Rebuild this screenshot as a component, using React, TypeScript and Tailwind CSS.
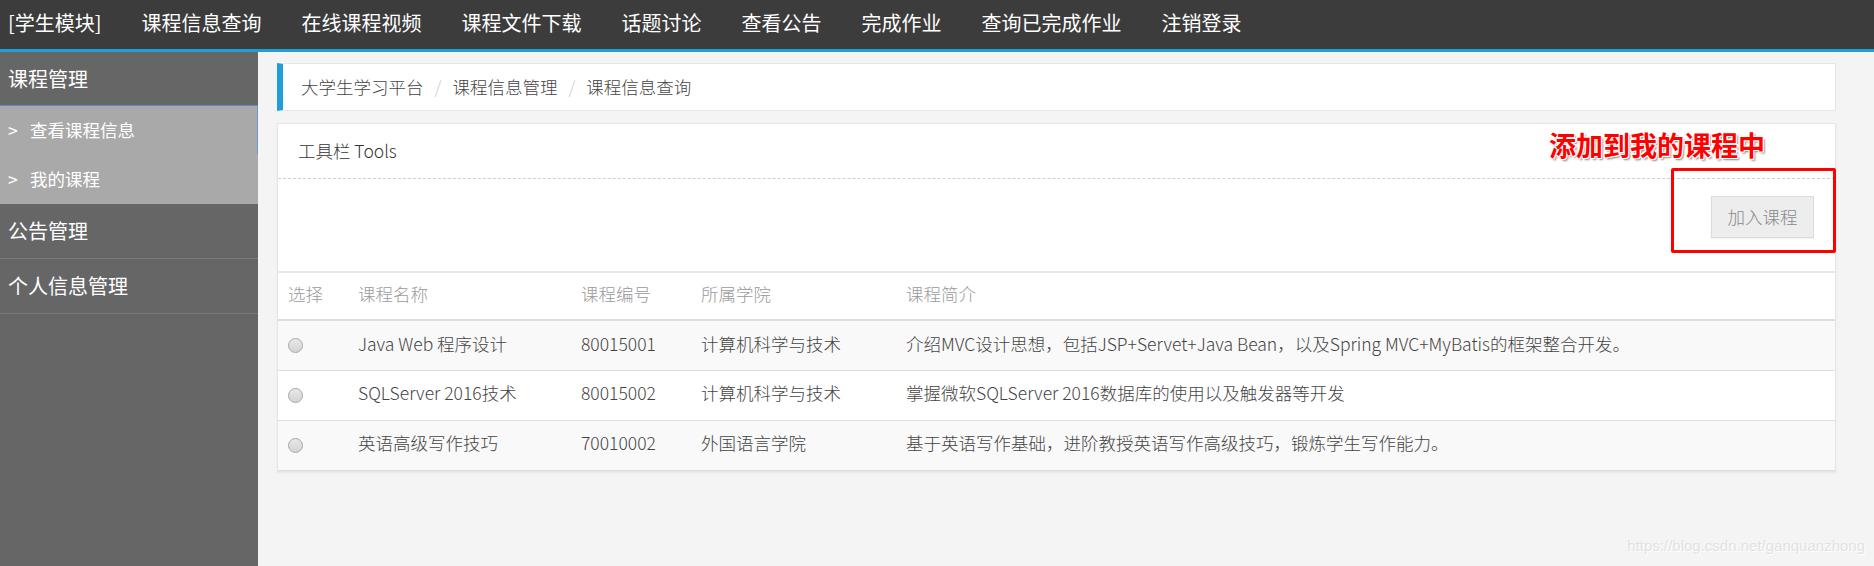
import React from "react";

const navItems = ["课程信息查询", "在线课程视频", "课程文件下载", "话题讨论", "查看公告", "完成作业", "查询已完成作业", "注销登录"];

const rows = [
  { name: "Java Web 程序设计", no: "80015001", college: "计算机科学与技术", intro: "介绍MVC设计思想，包括JSP+Servet+Java Bean，以及Spring MVC+MyBatis的框架整合开发。", bg: "bg-[#f9f9f9]" },
  { name: "SQLServer 2016技术", no: "80015002", college: "计算机科学与技术", intro: "掌握微软SQLServer 2016数据库的使用以及触发器等开发", bg: "bg-white" },
  { name: "英语高级写作技巧", no: "70010002", college: "外国语言学院", intro: "基于英语写作基础，进阶教授英语写作高级技巧，锻炼学生写作能力。", bg: "bg-[#f9f9f9]" },
];

export default function App() {
  return (
    <div className="relative w-[1874px] h-[566px] overflow-hidden flex flex-col bg-[#f4f4f4] font-['Noto_Sans_CJK_SC',sans-serif]">
      {/* top nav */}
      <div className="h-[52px] shrink-0 bg-[#3c3c3c] border-b-[3px] border-[#1e9fd8] flex items-center text-[20px] text-white pb-[4px]">
        <div className="pl-[8px] pr-[20px]">[学生模块]</div>
        {navItems.map((t) => (
          <div key={t} className="px-[20px] whitespace-nowrap">{t}</div>
        ))}
      </div>

      <div className="flex flex-1">
        {/* sidebar */}
        <aside className="w-[258px] shrink-0 bg-[#666666] text-white">
          <div className="h-[54px] flex items-center pl-[8px] text-[20px] border-b border-[#5d88cc]">课程管理</div>
          <div className="bg-[#a9a9a9] text-[17.5px]">
            <div className="h-[48px] flex items-center pl-[8px] border-r border-[#6f95d5]">
              <span className="w-[22px]">&gt;</span>查看课程信息
            </div>
            <div className="h-[50px] flex items-center pl-[8px]">
              <span className="w-[22px]">&gt;</span>我的课程
            </div>
          </div>
          <div className="h-[55px] flex items-center pl-[8px] text-[20px] border-b border-[#7a7a7a]">公告管理</div>
          <div className="h-[55px] flex items-center pl-[8px] text-[20px] border-b border-[#7a7a7a]">个人信息管理</div>
        </aside>

        {/* main */}
        <main className="flex-1 pl-[19px] pr-[38px] pt-[11px]">
          <div className="h-[48px] bg-white border border-[#e6e6e6] border-l-[6px] border-l-[#1e9fd8] flex items-center pl-[18px] text-[17.5px] text-[#444] font-light">
            <span>大学生学习平台</span>
            <span className="px-[11px] text-[#cccccc]">/</span>
            <span>课程信息管理</span>
            <span className="px-[11px] text-[#cccccc]">/</span>
            <span>课程信息查询</span>
          </div>

          <div className="relative mt-[12px] bg-white border border-[#e6e6e6] shadow-[0_1px_2px_rgba(0,0,0,0.06)]">
            <div className="h-[55px] flex items-center pl-[20px] border-b border-dashed border-[#cfcfcf] text-[17.5px] text-[#333] font-light">
              工具栏 Tools
            </div>
            <div className="h-[92px] flex justify-end items-start pt-[17px] pr-[21px]">
              <button className="w-[103px] h-[42px] bg-[#ededed] border border-[#dcdcdc] text-[17.5px] text-[#8a8a8a] font-light shadow-[0_1px_1px_rgba(0,0,0,0.05)]">
                加入课程
              </button>
            </div>
            <div className="h-[2px] bg-[#e8e8e8]" />
            <table className="w-full border-collapse text-[17.5px] font-light">
              <thead>
                <tr className="h-[47px] border-b-2 border-[#dddddd] text-[#9a9a9a]">
                  <th className="w-[70px] text-left font-light pl-[10px] pb-[3px]">选择</th>
                  <th className="w-[223px] text-left font-light pl-[10px] pb-[3px]">课程名称</th>
                  <th className="w-[120px] text-left font-light pl-[10px] pb-[3px]">课程编号</th>
                  <th className="w-[205px] text-left font-light pl-[10px] pb-[3px]">所属学院</th>
                  <th className="text-left font-light pl-[10px] pb-[3px]">课程简介</th>
                </tr>
              </thead>
              <tbody className="text-[#444]">
                {rows.map((r) => (
                  <tr key={r.no} className={`h-[50px] border-b border-[#dddddd] ${r.bg}`}>
                    <td className="pl-[10px]">
                      <div className="w-[15px] h-[15px] rounded-full border border-[#a9a9a9] bg-gradient-to-b from-[#e8e8e8] to-[#d4d4d4]" />
                    </td>
                    <td className="pl-[10px] pb-[3px] whitespace-nowrap">{r.name}</td>
                    <td className="pl-[10px] pb-[3px]">{r.no}</td>
                    <td className="pl-[10px] pb-[3px] whitespace-nowrap">{r.college}</td>
                    <td className="pl-[10px] pb-[3px] whitespace-nowrap">{r.intro}</td>
                  </tr>
                ))}
              </tbody>
            </table>

            {/* annotation */}
            <div className="absolute right-[70px] top-[1px] text-[27px] font-bold text-[#ff0000] whitespace-nowrap [text-shadow:1px_1px_0_#fff,-1px_-1px_0_#fff,1px_-1px_0_#fff,-1px_1px_0_#fff,2px_2px_2px_#888]">
              添加到我的课程中
            </div>
            <div className="absolute right-[-1px] top-[44px] w-[165px] h-[85px] border-[3px] border-[#ff0000] rounded-[2px]" />
          </div>
        </main>
      </div>

      <div className="absolute right-[9px] bottom-[9px] text-[15px] text-[#e2e2e2] font-['Liberation_Sans',sans-serif] [text-shadow:1px_1px_0_#fff]">
        https://blog.csdn.net/ganquanzhong
      </div>
    </div>
  );
}
